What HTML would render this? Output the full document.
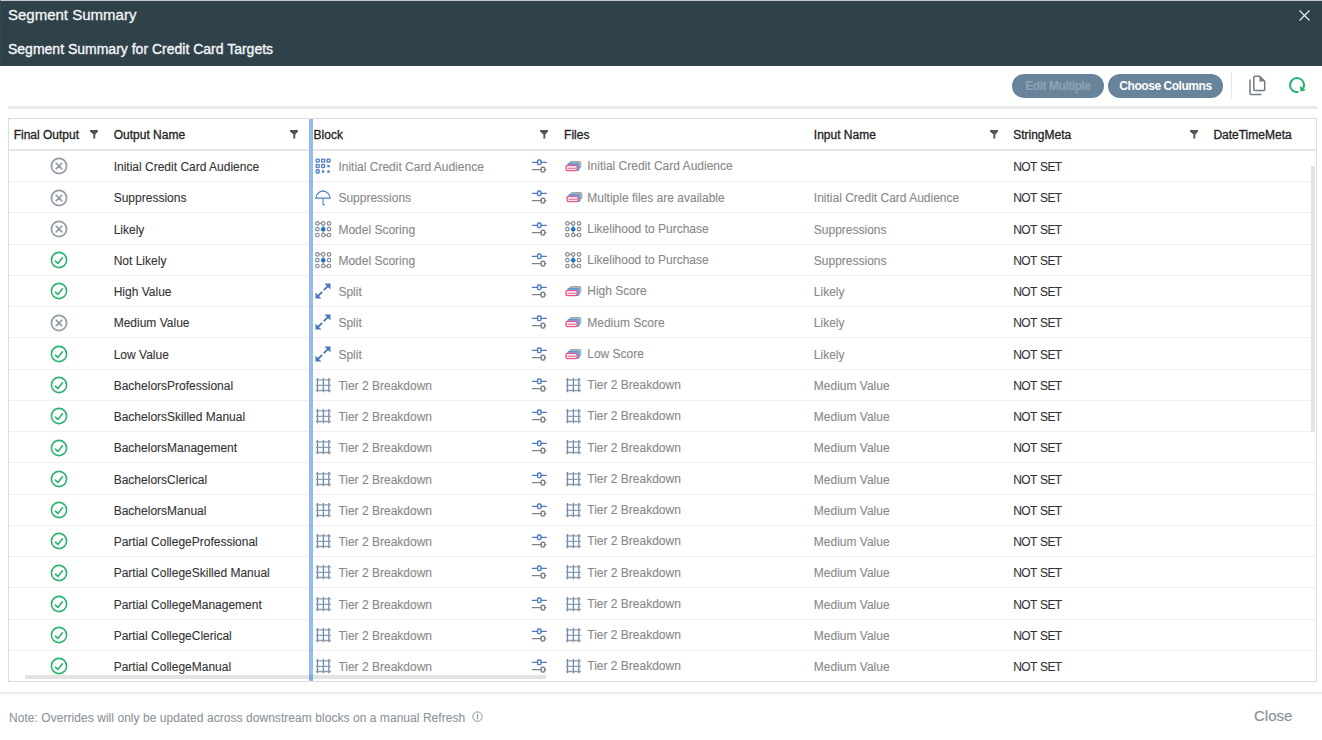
<!DOCTYPE html><html><head><meta charset="utf-8"><title>Segment Summary</title><style>
*{margin:0;padding:0;box-sizing:border-box}
html,body{width:1322px;height:740px;overflow:hidden;background:#fff;font-family:"Liberation Sans", sans-serif;}
.a{position:absolute;white-space:nowrap}
.hdr{position:absolute;left:0;top:0;width:1322px;height:66px;background:#2f424a;border-top:1px solid #c5c9cb;border-left:1px solid #34474e}
.t1{position:absolute;left:8px;top:6px;font-size:15px;line-height:18px;color:#f4f6f7;-webkit-text-stroke:0.3px #f4f6f7}
.t2{position:absolute;left:8px;top:40px;font-size:14px;line-height:18px;color:#f4f6f7;-webkit-text-stroke:0.35px #f4f6f7}
.btn{position:absolute;top:74px;height:24px;border-radius:12px;background:#68849a;font-size:12px;font-weight:bold;line-height:25px;text-align:center;letter-spacing:-0.45px}
.hl{position:absolute;left:8px;top:106px;width:1309px;height:3px;background:#e9e9e9}
.tbl{position:absolute;left:8px;top:118px;width:1309px;height:564px;border:1px solid #dcdcdc;overflow:hidden}
.hh{position:absolute;font-size:12px;line-height:14px;color:#222;-webkit-text-stroke:0.3px #222}
.ct{position:absolute;font-size:12px;line-height:14px;white-space:nowrap}
.dk{color:#333;-webkit-text-stroke:0.1px #333}
.gy{color:#888;-webkit-text-stroke:0.1px #888}
.rb{position:absolute;left:0;width:1309px;height:1px;background:#f0f0f0}
svg.i{position:absolute}
</style></head><body>

<svg width="0" height="0" style="position:absolute">
<defs>
 <symbol id="ix" viewBox="0 0 18 18">
  <circle cx="9" cy="9" r="7.6" fill="none" stroke="#939ba3" stroke-width="1.7"/>
  <path d="M6.1 6.1L11.9 11.9M11.9 6.1L6.1 11.9" stroke="#939ba3" stroke-width="1.5" stroke-linecap="round"/>
 </symbol>
 <symbol id="ic" viewBox="0 0 18 18">
  <circle cx="9" cy="9" r="7.6" fill="none" stroke="#2db36f" stroke-width="1.6"/>
  <path d="M5.4 10.1L7.9 12.5L12.4 6.8" fill="none" stroke="#2db36f" stroke-width="1.6" stroke-linecap="round" stroke-linejoin="round"/>
 </symbol>
 <symbol id="igrid" viewBox="0 0 16 16">
  <g fill="none" stroke="#4d7cc0" stroke-width="1.3">
   <rect x="1.2" y="1.2" width="3" height="3" rx=".5"/><rect x="6.6" y="1.2" width="3" height="3" rx=".5"/><rect x="12" y="1.2" width="3" height="3" rx=".5"/>
   <rect x="1.2" y="6.6" width="3" height="3" rx=".5"/><rect x="6.6" y="6.6" width="3" height="3" rx=".5"/>
   <rect x="1.2" y="12" width="3" height="3" rx=".5"/>
  </g>
  <g fill="#4d7cc0"><rect x="12.3" y="6.9" width="2.4" height="2.4"/><rect x="6.9" y="12.3" width="2.4" height="2.4"/><rect x="12.3" y="12.3" width="2.4" height="2.4"/></g>
 </symbol>
 <symbol id="iumb" viewBox="0 0 16 16">
  <g fill="none" stroke="#5b87c6" stroke-width="1.2" stroke-linecap="round" stroke-linejoin="round">
   <path d="M0.8 8.5C1 4.3 4.2 1.2 8 1.2C11.8 1.2 15 4.3 15.2 8.5C14 7.6 12.8 7.6 11.6 8.5C10.4 7.6 9.2 7.6 8 8.5C6.8 7.6 5.6 7.6 4.4 8.5C3.2 7.6 2 7.6 0.8 8.5Z"/>
   <path d="M8 8.5V14.2C8 15 8.8 15.2 9.4 14.6"/>
   <path d="M8 0.6V1.2"/>
  </g>
 </symbol>
 <symbol id="imodel" viewBox="0 0 17 17">
  <g fill="none" stroke="#858c93" stroke-width="1.2">
   <path d="M4.2 2.4H6.5M8.2 4.2V6.5M8.2 10.2V12.6M9.9 14.2H12.3"/>
   <circle cx="2.4" cy="2.4" r="1.75"/><circle cx="8.2" cy="2.4" r="1.75"/><circle cx="14" cy="2.4" r="1.75"/>
   <circle cx="2.4" cy="8.2" r="1.75"/><circle cx="14" cy="8.2" r="1.75"/>
   <circle cx="2.4" cy="14" r="1.75"/><circle cx="8.2" cy="14" r="1.75"/><circle cx="14" cy="14" r="1.75"/>
  </g>
  <circle cx="8.2" cy="8.2" r="2.3" fill="#1f72c6"/>
 </symbol>
 <symbol id="isplit" viewBox="0 0 16 16">
  <g fill="#4a78be">
   <path d="M9.5 0.5H15.5V6.5L13.4 4.4Z"/>
   <path d="M0.5 9.5V15.5H6.5L4.4 13.4Z"/>
  </g>
  <g stroke="#4a78be" stroke-width="1.9" stroke-linecap="round">
   <path d="M13.2 2.8L9.3 6.7"/><path d="M6.7 9.3L2.8 13.2"/>
  </g>
 </symbol>
 <symbol id="itier" viewBox="0 0 16 16">
  <g stroke="#5b87c6" stroke-width="1.3"><path d="M2.5 0.95V15.35M8.4 0.95V15.35M13.85 0.95V15.35"/></g>
  <g stroke="#959ba1" stroke-width="1.3"><path d="M0.9 2.95H15.9M0.9 8.45H15.9M0.9 13.5H15.9"/></g>
 </symbol>
 <symbol id="isl" viewBox="0 0 16 14">
  <g fill="none" stroke-width="1.3">
   <path d="M0.8 3.3H6.7M9.9 3.3H15.8" stroke="#4d7cc0"/>
   <rect x="6.6" y="1.0" width="3.4" height="4.6" rx="1" stroke="#4d7cc0" stroke-width="1.45"/>
   <path d="M0.8 10.6H10.3M13.5 10.6H15.4" stroke="#7d848b"/>
   <rect x="10.2" y="8.3" width="3.4" height="4.6" rx="1" stroke="#7d848b" stroke-width="1.45"/>
  </g>
 </symbol>
 <symbol id="ifiles" viewBox="0 0 17 11">
  <rect x="5.05" y="0.65" width="10.7" height="6.0" rx="1.2" fill="#c9c9c9" stroke="#a5a5a5" stroke-width="1.1"/>
  <rect x="2.95" y="2.35" width="11.1" height="7.0" rx="1.2" fill="#74a9de" stroke="#5b9bd5" stroke-width="1.1"/>
  <rect x="1.05" y="4.45" width="11.0" height="5.1" rx="1.1" fill="#fce6ee" stroke="#e5588a" stroke-width="1.3"/>
  <path d="M2.8 7.3H10.9" stroke="#e5588a" stroke-width="0.9"/>
 </symbol>
 <symbol id="ifilter" viewBox="0 0 8 9">
  <path d="M0 0H8V1.6L5.3 4.6V8.3L3.4 9V4.6L0 1.6Z" fill="#555"/>
 </symbol>
</defs>
</svg>

<div class="hdr"></div>
<div class="t1">Segment Summary</div>
<div class="t2">Segment Summary for Credit Card Targets</div>
<svg class="i" style="left:1299px;top:10px" width="11" height="11" viewBox="0 0 11 11"><path d="M0.5 0.5L10.5 10.5M10.5 0.5L0.5 10.5" stroke="#e3e7e9" stroke-width="1.3"/></svg>
<div class="btn" style="left:1012px;width:92px;color:#8fa4b4">Edit Multiple</div>
<div class="btn" style="left:1108px;width:115px;color:#fff">Choose Columns</div>
<div class="a" style="left:1231px;top:72px;width:1px;height:27px;background:#e8e8e8"></div>
<svg class="i" style="left:1248px;top:75px" width="19" height="21" viewBox="0 0 19 21"><g fill="none" stroke="#737c85" stroke-width="1.5" stroke-linejoin="round"><path d="M2 4.5V18.5Q2 19.5 3 19.5H13.5"/><path d="M6.8 1.3H11.8L16.7 6.2V14.5Q16.7 15.6 15.6 15.6H6.9Q5.8 15.6 5.8 14.5V2.4Q5.8 1.3 6.8 1.3Z"/></g><path d="M11.5 1.3V6.5H16.7Z" fill="#737c85"/></svg>
<svg class="i" style="left:1287px;top:76px" width="20" height="20" viewBox="0 0 20 20"><path d="M11.6 15.9A7 7 0 1 1 16.1 12.6" fill="none" stroke="#22b46b" stroke-width="1.95"/><path d="M12.9 10.1L13.6 15.6L18.8 14.3Z" fill="#1fb068"/></svg>
<div class="hl"></div>
<div class="tbl">
<div class="a" style="left:0;top:30px;width:1309px;height:2px;background:#e6e6e6"></div>
<div class="hh" style="left:4.7px;top:8.7px">Final Output</div>
<svg class="i" style="left:81.0px;top:11.0px" width="8" height="9"><use href="#ifilter"/></svg>
<div class="hh" style="left:104.7px;top:8.7px">Output Name</div>
<svg class="i" style="left:281.0px;top:11.0px" width="8" height="9"><use href="#ifilter"/></svg>
<div class="hh" style="left:304.6px;top:8.7px">Block</div>
<svg class="i" style="left:530.5px;top:11.0px" width="8" height="9"><use href="#ifilter"/></svg>
<div class="hh" style="left:555.1px;top:8.7px">Files</div>
<div class="hh" style="left:804.8px;top:8.7px">Input Name</div>
<svg class="i" style="left:980.5px;top:11.0px" width="8" height="9"><use href="#ifilter"/></svg>
<div class="hh" style="left:1004.2px;top:8.7px">StringMeta</div>
<svg class="i" style="left:1181.0px;top:11.0px" width="8" height="9"><use href="#ifilter"/></svg>
<div class="hh" style="left:1204.4px;top:8.7px">DateTimeMeta</div>
<div class="rb" style="top:62.15px"></div>
<svg class="i" style="left:40.7px;top:38.30px" width="18" height="18"><use href="#ix"/></svg>
<div class="ct dk" style="left:104.7px;top:41.00px">Initial Credit Card Audience</div>
<svg class="i" style="left:305.9px;top:39.00px" width="16" height="16"><use href="#igrid"/></svg>
<div class="ct gy" style="left:329.4px;top:41.00px">Initial Credit Card Audience</div>
<svg class="i" style="left:522.1px;top:40.20px" width="16" height="14"><use href="#isl"/></svg>
<svg class="i" style="left:555.5px;top:42.00px" width="17" height="11"><use href="#ifiles"/></svg>
<div class="ct gy" style="left:578.25px;top:40.00px">Initial Credit Card Audience</div>
<div class="ct dk" style="left:1004.2px;top:41.00px;letter-spacing:-0.6px;word-spacing:0.8px">NOT SET</div>
<div class="rb" style="top:93.40px"></div>
<svg class="i" style="left:40.7px;top:69.55px" width="18" height="18"><use href="#ix"/></svg>
<div class="ct dk" style="left:104.7px;top:72.00px">Suppressions</div>
<svg class="i" style="left:306.0px;top:70.55px" width="16" height="16"><use href="#iumb"/></svg>
<div class="ct gy" style="left:329.4px;top:72.00px">Suppressions</div>
<svg class="i" style="left:522.1px;top:71.45px" width="16" height="14"><use href="#isl"/></svg>
<svg class="i" style="left:557.0px;top:73.25px" width="17" height="11"><use href="#ifiles"/></svg>
<div class="ct gy" style="left:578.25px;top:72.00px">Multiple files are available</div>
<div class="ct gy" style="left:804.8px;top:72.00px">Initial Credit Card Audience</div>
<div class="ct dk" style="left:1004.2px;top:72.00px;letter-spacing:-0.6px;word-spacing:0.8px">NOT SET</div>
<div class="rb" style="top:124.65px"></div>
<svg class="i" style="left:40.7px;top:100.80px" width="18" height="18"><use href="#ix"/></svg>
<div class="ct dk" style="left:104.7px;top:104.00px">Likely</div>
<svg class="i" style="left:306.1px;top:101.70px" width="17" height="17"><use href="#imodel"/></svg>
<div class="ct gy" style="left:329.4px;top:104.00px">Model Scoring</div>
<svg class="i" style="left:522.1px;top:102.70px" width="16" height="14"><use href="#isl"/></svg>
<svg class="i" style="left:555.7px;top:101.70px" width="17" height="17"><use href="#imodel"/></svg>
<div class="ct gy" style="left:578.25px;top:103.00px">Likelihood to Purchase</div>
<div class="ct gy" style="left:804.8px;top:104.00px">Suppressions</div>
<div class="ct dk" style="left:1004.2px;top:104.00px;letter-spacing:-0.6px;word-spacing:0.8px">NOT SET</div>
<div class="rb" style="top:155.90px"></div>
<svg class="i" style="left:40.7px;top:132.05px" width="18" height="18"><use href="#ic"/></svg>
<div class="ct dk" style="left:104.7px;top:135.00px">Not Likely</div>
<svg class="i" style="left:306.1px;top:132.95px" width="17" height="17"><use href="#imodel"/></svg>
<div class="ct gy" style="left:329.4px;top:135.00px">Model Scoring</div>
<svg class="i" style="left:522.1px;top:133.95px" width="16" height="14"><use href="#isl"/></svg>
<svg class="i" style="left:555.7px;top:132.95px" width="17" height="17"><use href="#imodel"/></svg>
<div class="ct gy" style="left:578.25px;top:134.00px">Likelihood to Purchase</div>
<div class="ct gy" style="left:804.8px;top:135.00px">Suppressions</div>
<div class="ct dk" style="left:1004.2px;top:135.00px;letter-spacing:-0.6px;word-spacing:0.8px">NOT SET</div>
<div class="rb" style="top:187.15px"></div>
<svg class="i" style="left:40.7px;top:163.30px" width="18" height="18"><use href="#ic"/></svg>
<div class="ct dk" style="left:104.7px;top:166.00px">High Value</div>
<svg class="i" style="left:306.2px;top:164.10px" width="16" height="16"><use href="#isplit"/></svg>
<div class="ct gy" style="left:329.4px;top:166.00px">Split</div>
<svg class="i" style="left:522.1px;top:165.20px" width="16" height="14"><use href="#isl"/></svg>
<svg class="i" style="left:555.5px;top:167.00px" width="17" height="11"><use href="#ifiles"/></svg>
<div class="ct gy" style="left:578.25px;top:165.00px">High Score</div>
<div class="ct gy" style="left:804.8px;top:166.00px">Likely</div>
<div class="ct dk" style="left:1004.2px;top:166.00px;letter-spacing:-0.6px;word-spacing:0.8px">NOT SET</div>
<div class="rb" style="top:218.40px"></div>
<svg class="i" style="left:40.7px;top:194.55px" width="18" height="18"><use href="#ix"/></svg>
<div class="ct dk" style="left:104.7px;top:197.00px">Medium Value</div>
<svg class="i" style="left:306.2px;top:195.35px" width="16" height="16"><use href="#isplit"/></svg>
<div class="ct gy" style="left:329.4px;top:197.00px">Split</div>
<svg class="i" style="left:522.1px;top:196.45px" width="16" height="14"><use href="#isl"/></svg>
<svg class="i" style="left:555.5px;top:198.25px" width="17" height="11"><use href="#ifiles"/></svg>
<div class="ct gy" style="left:578.25px;top:197.00px">Medium Score</div>
<div class="ct gy" style="left:804.8px;top:197.00px">Likely</div>
<div class="ct dk" style="left:1004.2px;top:197.00px;letter-spacing:-0.6px;word-spacing:0.8px">NOT SET</div>
<div class="rb" style="top:249.65px"></div>
<svg class="i" style="left:40.7px;top:225.80px" width="18" height="18"><use href="#ic"/></svg>
<div class="ct dk" style="left:104.7px;top:229.00px">Low Value</div>
<svg class="i" style="left:306.2px;top:226.60px" width="16" height="16"><use href="#isplit"/></svg>
<div class="ct gy" style="left:329.4px;top:229.00px">Split</div>
<svg class="i" style="left:522.1px;top:227.70px" width="16" height="14"><use href="#isl"/></svg>
<svg class="i" style="left:555.5px;top:229.50px" width="17" height="11"><use href="#ifiles"/></svg>
<div class="ct gy" style="left:578.25px;top:228.00px">Low Score</div>
<div class="ct gy" style="left:804.8px;top:229.00px">Likely</div>
<div class="ct dk" style="left:1004.2px;top:229.00px;letter-spacing:-0.6px;word-spacing:0.8px">NOT SET</div>
<div class="rb" style="top:280.90px"></div>
<svg class="i" style="left:40.7px;top:257.05px" width="18" height="18"><use href="#ic"/></svg>
<div class="ct dk" style="left:104.7px;top:260.00px">BachelorsProfessional</div>
<svg class="i" style="left:306.0px;top:257.75px" width="16" height="16"><use href="#itier"/></svg>
<div class="ct gy" style="left:329.4px;top:260.00px">Tier 2 Breakdown</div>
<svg class="i" style="left:522.1px;top:258.95px" width="16" height="14"><use href="#isl"/></svg>
<svg class="i" style="left:555.6px;top:257.75px" width="16" height="16"><use href="#itier"/></svg>
<div class="ct gy" style="left:578.25px;top:259.00px">Tier 2 Breakdown</div>
<div class="ct gy" style="left:804.8px;top:260.00px">Medium Value</div>
<div class="ct dk" style="left:1004.2px;top:260.00px;letter-spacing:-0.6px;word-spacing:0.8px">NOT SET</div>
<div class="rb" style="top:312.15px"></div>
<svg class="i" style="left:40.7px;top:288.30px" width="18" height="18"><use href="#ic"/></svg>
<div class="ct dk" style="left:104.7px;top:291.00px">BachelorsSkilled Manual</div>
<svg class="i" style="left:306.0px;top:289.00px" width="16" height="16"><use href="#itier"/></svg>
<div class="ct gy" style="left:329.4px;top:291.00px">Tier 2 Breakdown</div>
<svg class="i" style="left:522.1px;top:290.20px" width="16" height="14"><use href="#isl"/></svg>
<svg class="i" style="left:555.6px;top:289.00px" width="16" height="16"><use href="#itier"/></svg>
<div class="ct gy" style="left:578.25px;top:290.00px">Tier 2 Breakdown</div>
<div class="ct gy" style="left:804.8px;top:291.00px">Medium Value</div>
<div class="ct dk" style="left:1004.2px;top:291.00px;letter-spacing:-0.6px;word-spacing:0.8px">NOT SET</div>
<div class="rb" style="top:343.40px"></div>
<svg class="i" style="left:40.7px;top:319.55px" width="18" height="18"><use href="#ic"/></svg>
<div class="ct dk" style="left:104.7px;top:322.00px">BachelorsManagement</div>
<svg class="i" style="left:306.0px;top:320.25px" width="16" height="16"><use href="#itier"/></svg>
<div class="ct gy" style="left:329.4px;top:322.00px">Tier 2 Breakdown</div>
<svg class="i" style="left:522.1px;top:321.45px" width="16" height="14"><use href="#isl"/></svg>
<svg class="i" style="left:555.6px;top:320.25px" width="16" height="16"><use href="#itier"/></svg>
<div class="ct gy" style="left:578.25px;top:322.00px">Tier 2 Breakdown</div>
<div class="ct gy" style="left:804.8px;top:322.00px">Medium Value</div>
<div class="ct dk" style="left:1004.2px;top:322.00px;letter-spacing:-0.6px;word-spacing:0.8px">NOT SET</div>
<div class="rb" style="top:374.65px"></div>
<svg class="i" style="left:40.7px;top:350.80px" width="18" height="18"><use href="#ic"/></svg>
<div class="ct dk" style="left:104.7px;top:354.00px">BachelorsClerical</div>
<svg class="i" style="left:306.0px;top:351.50px" width="16" height="16"><use href="#itier"/></svg>
<div class="ct gy" style="left:329.4px;top:354.00px">Tier 2 Breakdown</div>
<svg class="i" style="left:522.1px;top:352.70px" width="16" height="14"><use href="#isl"/></svg>
<svg class="i" style="left:555.6px;top:351.50px" width="16" height="16"><use href="#itier"/></svg>
<div class="ct gy" style="left:578.25px;top:353.00px">Tier 2 Breakdown</div>
<div class="ct gy" style="left:804.8px;top:354.00px">Medium Value</div>
<div class="ct dk" style="left:1004.2px;top:354.00px;letter-spacing:-0.6px;word-spacing:0.8px">NOT SET</div>
<div class="rb" style="top:405.90px"></div>
<svg class="i" style="left:40.7px;top:382.05px" width="18" height="18"><use href="#ic"/></svg>
<div class="ct dk" style="left:104.7px;top:385.00px">BachelorsManual</div>
<svg class="i" style="left:306.0px;top:382.75px" width="16" height="16"><use href="#itier"/></svg>
<div class="ct gy" style="left:329.4px;top:385.00px">Tier 2 Breakdown</div>
<svg class="i" style="left:522.1px;top:383.95px" width="16" height="14"><use href="#isl"/></svg>
<svg class="i" style="left:555.6px;top:382.75px" width="16" height="16"><use href="#itier"/></svg>
<div class="ct gy" style="left:578.25px;top:384.00px">Tier 2 Breakdown</div>
<div class="ct gy" style="left:804.8px;top:385.00px">Medium Value</div>
<div class="ct dk" style="left:1004.2px;top:385.00px;letter-spacing:-0.6px;word-spacing:0.8px">NOT SET</div>
<div class="rb" style="top:437.15px"></div>
<svg class="i" style="left:40.7px;top:413.30px" width="18" height="18"><use href="#ic"/></svg>
<div class="ct dk" style="left:104.7px;top:416.00px">Partial CollegeProfessional</div>
<svg class="i" style="left:306.0px;top:414.00px" width="16" height="16"><use href="#itier"/></svg>
<div class="ct gy" style="left:329.4px;top:416.00px">Tier 2 Breakdown</div>
<svg class="i" style="left:522.1px;top:415.20px" width="16" height="14"><use href="#isl"/></svg>
<svg class="i" style="left:555.6px;top:414.00px" width="16" height="16"><use href="#itier"/></svg>
<div class="ct gy" style="left:578.25px;top:415.00px">Tier 2 Breakdown</div>
<div class="ct gy" style="left:804.8px;top:416.00px">Medium Value</div>
<div class="ct dk" style="left:1004.2px;top:416.00px;letter-spacing:-0.6px;word-spacing:0.8px">NOT SET</div>
<div class="rb" style="top:468.40px"></div>
<svg class="i" style="left:40.7px;top:444.55px" width="18" height="18"><use href="#ic"/></svg>
<div class="ct dk" style="left:104.7px;top:447.00px">Partial CollegeSkilled Manual</div>
<svg class="i" style="left:306.0px;top:445.25px" width="16" height="16"><use href="#itier"/></svg>
<div class="ct gy" style="left:329.4px;top:447.00px">Tier 2 Breakdown</div>
<svg class="i" style="left:522.1px;top:446.45px" width="16" height="14"><use href="#isl"/></svg>
<svg class="i" style="left:555.6px;top:445.25px" width="16" height="16"><use href="#itier"/></svg>
<div class="ct gy" style="left:578.25px;top:447.00px">Tier 2 Breakdown</div>
<div class="ct gy" style="left:804.8px;top:447.00px">Medium Value</div>
<div class="ct dk" style="left:1004.2px;top:447.00px;letter-spacing:-0.6px;word-spacing:0.8px">NOT SET</div>
<div class="rb" style="top:499.65px"></div>
<svg class="i" style="left:40.7px;top:475.80px" width="18" height="18"><use href="#ic"/></svg>
<div class="ct dk" style="left:104.7px;top:479.00px">Partial CollegeManagement</div>
<svg class="i" style="left:306.0px;top:476.50px" width="16" height="16"><use href="#itier"/></svg>
<div class="ct gy" style="left:329.4px;top:479.00px">Tier 2 Breakdown</div>
<svg class="i" style="left:522.1px;top:477.70px" width="16" height="14"><use href="#isl"/></svg>
<svg class="i" style="left:555.6px;top:476.50px" width="16" height="16"><use href="#itier"/></svg>
<div class="ct gy" style="left:578.25px;top:478.00px">Tier 2 Breakdown</div>
<div class="ct gy" style="left:804.8px;top:479.00px">Medium Value</div>
<div class="ct dk" style="left:1004.2px;top:479.00px;letter-spacing:-0.6px;word-spacing:0.8px">NOT SET</div>
<div class="rb" style="top:530.90px"></div>
<svg class="i" style="left:40.7px;top:507.05px" width="18" height="18"><use href="#ic"/></svg>
<div class="ct dk" style="left:104.7px;top:510.00px">Partial CollegeClerical</div>
<svg class="i" style="left:306.0px;top:507.75px" width="16" height="16"><use href="#itier"/></svg>
<div class="ct gy" style="left:329.4px;top:510.00px">Tier 2 Breakdown</div>
<svg class="i" style="left:522.1px;top:508.95px" width="16" height="14"><use href="#isl"/></svg>
<svg class="i" style="left:555.6px;top:507.75px" width="16" height="16"><use href="#itier"/></svg>
<div class="ct gy" style="left:578.25px;top:509.00px">Tier 2 Breakdown</div>
<div class="ct gy" style="left:804.8px;top:510.00px">Medium Value</div>
<div class="ct dk" style="left:1004.2px;top:510.00px;letter-spacing:-0.6px;word-spacing:0.8px">NOT SET</div>
<div class="rb" style="top:562.15px"></div>
<svg class="i" style="left:40.7px;top:538.30px" width="18" height="18"><use href="#ic"/></svg>
<div class="ct dk" style="left:104.7px;top:541.00px">Partial CollegeManual</div>
<svg class="i" style="left:306.0px;top:539.00px" width="16" height="16"><use href="#itier"/></svg>
<div class="ct gy" style="left:329.4px;top:541.00px">Tier 2 Breakdown</div>
<svg class="i" style="left:522.1px;top:540.20px" width="16" height="14"><use href="#isl"/></svg>
<svg class="i" style="left:555.6px;top:539.00px" width="16" height="16"><use href="#itier"/></svg>
<div class="ct gy" style="left:578.25px;top:540.00px">Tier 2 Breakdown</div>
<div class="ct gy" style="left:804.8px;top:541.00px">Medium Value</div>
<div class="ct dk" style="left:1004.2px;top:541.00px;letter-spacing:-0.6px;word-spacing:0.8px">NOT SET</div>
<div class="a" style="left:300px;top:0;width:4px;height:562px;background:#93bbec"></div>
<div class="a" style="left:16px;top:556px;width:521px;height:4px;background:#e3e3e3"></div>
<div class="a" style="left:1302px;top:47.400000000000006px;width:4px;height:265px;background:#e3e3e3"></div>
</div>
<div class="a" style="left:309px;top:675px;width:4px;height:5px;background:#82a9db"></div>
<div class="a" style="left:0;top:692px;width:1322px;height:2px;background:#ededed"></div>
<div class="ct" style="left:9px;top:710.5px;color:#8b949c;letter-spacing:0.05px;-webkit-text-stroke:0.1px #8b949c">Note: Overrides will only be updated across downstream blocks on a manual Refresh</div>
<svg class="i" style="left:472px;top:711px" width="11" height="11" viewBox="0 0 11 11"><circle cx="5.5" cy="5.6" r="4.7" fill="none" stroke="#8b949c" stroke-width="1"/><path d="M5.5 3V8.2" stroke="#8b949c" stroke-width="1.1"/></svg>
<div class="a" style="left:1254px;top:707px;font-size:15px;line-height:18px;color:#8a939b;-webkit-text-stroke:0.2px #8a939b">Close</div>
</body></html>
